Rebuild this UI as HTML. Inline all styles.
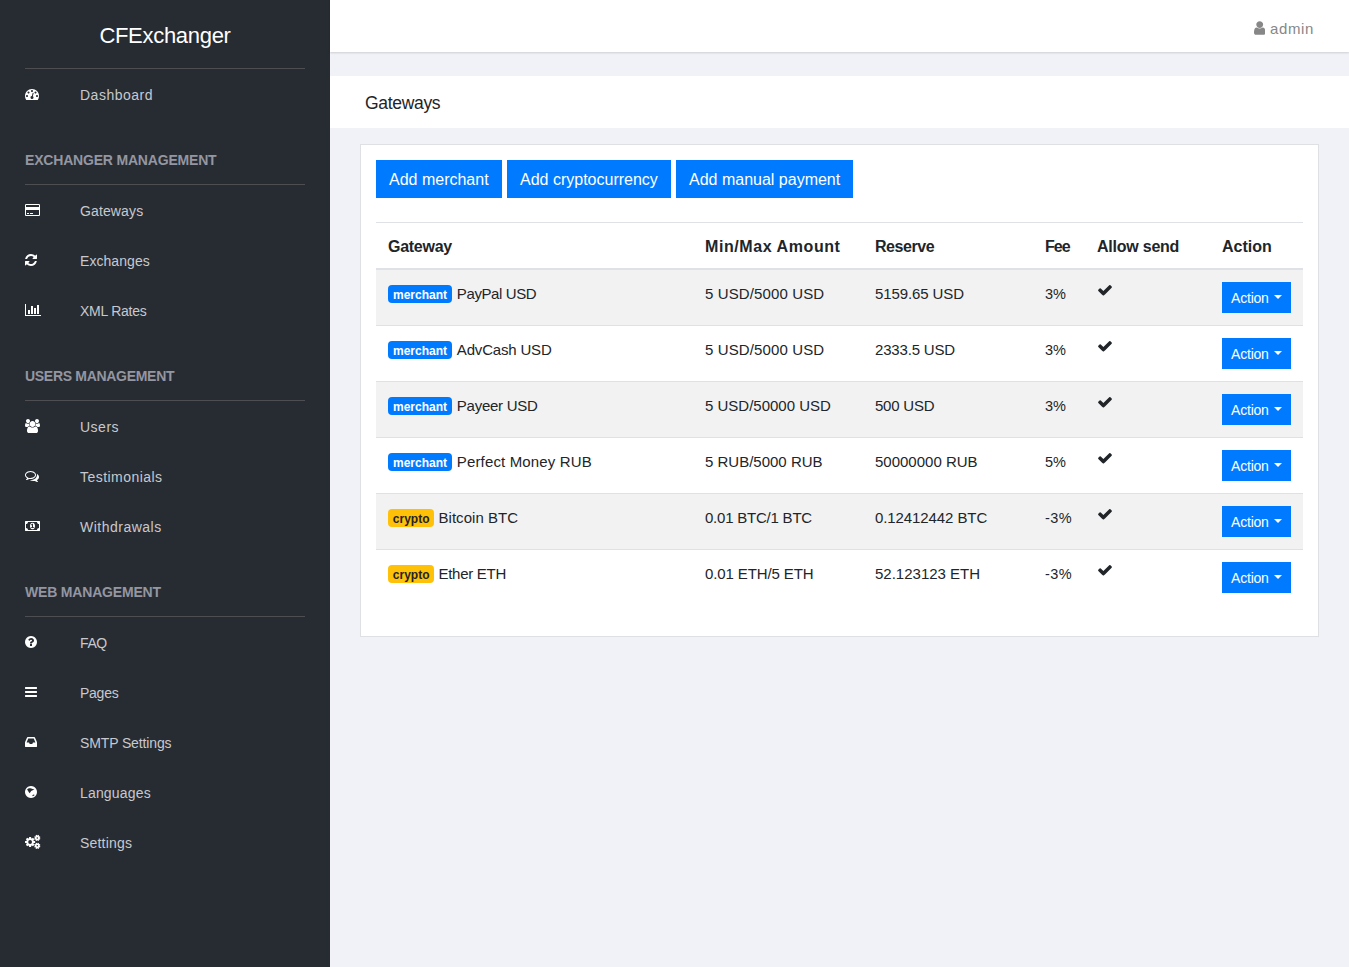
<!DOCTYPE html>
<html lang="en">
<head>
<meta charset="utf-8">
<title>CFExchanger - Gateways</title>
<style>
*{box-sizing:border-box}
html,body{margin:0;padding:0}
body{width:1349px;height:967px;overflow:hidden;background:#f1f2f7;font-family:"Liberation Sans",sans-serif;font-size:16px;color:#212529;position:relative}
a{text-decoration:none;color:inherit}
ul{list-style:none;margin:0;padding:0}
/* ---------- sidebar ---------- */
#left-panel{position:absolute;left:0;top:0;width:330px;height:967px;background:#272c33;padding:0 25px}
.brand{height:69px;border-bottom:1px solid #4e4e52;text-align:center;color:#fff;font-size:22px;line-height:25px;padding-top:23px}
.nav li a{display:block;height:50px;line-height:50px;color:#c8c9ce;font-size:14px;position:relative;padding-left:55px}
.nav li a svg{position:absolute;left:0;top:18px;fill:#fff;overflow:visible}
.nav li a span,.nav li.mt span{position:relative;top:1px}
.nav li.mt{margin:0;padding:15px 0 0;height:66px;line-height:50px;font-size:14px;font-weight:700;color:#9496a1;border-bottom:1px solid #4e4e52;text-transform:uppercase}
/* ---------- right ---------- */
#right-panel{position:absolute;left:330px;top:0;width:1019px;height:967px}
#header{height:52px;background:#fff;box-shadow:0 1px 2px rgba(0,0,0,.15);position:relative}
.user{position:absolute;left:924px;top:0;width:70px;height:52px;color:#878787;font-size:15px;line-height:18px}
.user svg{fill:#878787;position:absolute;left:0;top:20px}
.user span{position:absolute;left:16px;top:20px}
.breadcrumbs{margin-top:24px;height:52px;background:#fff;padding:0 35px}
.breadcrumbs h1{margin:0;font-size:17.5px;font-weight:400;line-height:52px;color:#212529;position:relative;top:1px}
.content{padding:0 30px;margin-top:16px}
.card{background:#fff;border:1px solid #dfe0e4;padding:15px;height:493px}
.btn{display:inline-block;background:#007bff;border:1px solid #007bff;color:#fff;font-size:16px;line-height:24px;padding:6px 12px;height:38px;vertical-align:top;white-space:nowrap}
.btns{height:38px;font-size:0}
.btns .btn{margin-right:5px}
.btns .btn:nth-child(1){width:126px}
.btns .btn:nth-child(2){width:164px}
.btns .btn:nth-child(3){width:177px}
.btn span{position:relative;top:1px}
th span{position:relative;top:1px}
table{border-collapse:separate;border-spacing:0;margin-top:24px;width:927px;table-layout:fixed}
th,td{text-align:left;padding:0 12px;vertical-align:top}
th{height:48px;border-top:1px solid #dee2e6;border-bottom:2px solid #dee2e6;font-weight:700;font-size:16px;line-height:22px;padding-top:12px}
td{height:56px;border-bottom:1px solid #dee2e6;padding-top:12px;line-height:24px;font-size:15px}
tbody tr:last-child td{height:55px;border-bottom:0}
tbody tr:nth-child(odd){background:#f2f2f2}
.badge{display:inline-block;font-size:12px;font-weight:700;line-height:12px;padding:4px 4.8px 2px;border-radius:4px;vertical-align:baseline;color:#fff;background:#007bff;position:relative;top:0;width:64px;text-align:center;margin-right:.7px;white-space:nowrap}
.badge.w{background:#ffc107;color:#212529;width:46px;margin-right:.3px}
.btn-sm{font-size:14px;line-height:21px;padding:4px 8px;height:31px;width:69px}
.btn-sm i{display:inline-block;width:0;height:0;margin-left:5px;vertical-align:3.5px;border-top:4.2px solid #fff;border-left:4.2px solid transparent;border-right:4.2px solid transparent}
td svg{fill:#212529;display:block}
.fee{font-size:14.5px}
</style>
</head>
<body>
<aside id="left-panel">
  <div class="brand"><span style="letter-spacing:-0.30px">CFExchanger</span></div>
  <ul class="nav">
    <li><a href="#"><svg width="14" height="14" viewBox="0 0 1792 1792"><path d="M384 1152q0-53-37.500-90.500t-90.500-37.500-90.500 37.500-37.500 90.500 37.500 90.500 90.500 37.500 90.500-37.500 37.500-90.500zm192-448q0-53-37.500-90.500t-90.500-37.500-90.500 37.500-37.500 90.500 37.500 90.500 90.500 37.500 90.500-37.500 37.500-90.500zm428 481l101-382q6-26-7.500-48.500t-38.500-29.500-48 6.500-30 39.500l-101 382q-60 5-107 43.500t-63 98.500q-20 77 20 146t117 89 146-20 89-117q16-60-6-117t-72-91zm660-33q0-53-37.500-90.500t-90.500-37.500-90.500 37.500-37.500 90.500 37.500 90.500 90.500 37.500 90.500-37.500 37.500-90.500zm-640-640q0-53-37.500-90.500t-90.500-37.500-90.500 37.500-37.500 90.500 37.500 90.500 90.500 37.500 90.500-37.500 37.500-90.500zm448 192q0-53-37.500-90.500t-90.500-37.500-90.500 37.500-37.500 90.500 37.500 90.500 90.500 37.500 90.500-37.500 37.500-90.500zm320 448q0 261-141 483-19 29-54 29h-1402q-35 0-54-29-141-221-141-483 0-182 71-348t191-286 286-191 348-71 348 71 286 191 191 286 71 348z"/></svg><span style="letter-spacing:0.50px">Dashboard</span></a></li>
    <li class="mt"><span style="letter-spacing:-0.19px">Exchanger management</span></li>
    <li><a href="#"><svg width="15" height="14" viewBox="0 0 1920 1792"><path d="M1760 128q66 0 113 47t47 113v1216q0 66-47 113t-113 47h-1600q-66 0-113-47t-47-113v-1216q0-66 47-113t113-47h1600zm-1600 128q-13 0-22.500 9.500t-9.500 22.500v224h1664v-224q0-13-9.500-22.500t-22.500-9.500h-1600zm1600 1280q13 0 22.500-9.500t9.500-22.500v-608h-1664v608q0 13 9.500 22.500t22.500 9.500h1600zm-1504-128v-128h256v128h-256zm384 0v-128h384v128h-384z"/></svg><span style="letter-spacing:0.13px">Gateways</span></a></li>
    <li><a href="#"><svg width="12" height="14" viewBox="0 0 1536 1792"><path d="M1511 1056q0 5-1 7-64 268-268 434.500t-478 166.500q-146 0-282.500-55t-243.500-157l-129 129q-19 19-45 19t-45-19-19-45v-448q0-26 19-45t45-19h448q26 0 45 19t19 45-19 45l-137 137q71 66 161 102t187 36q134 0 250-65t186-179q11-17 53-117 8-23 30-23h192q13 0 22.500 9.500t9.500 22.500zm25-800v448q0 26-19 45t-45 19h-448q-26 0-45-19t-19-45 19-45l138-138q-148-137-349-137-134 0-250 65t-186 179q-11 17-53 117-8 23-30 23h-199q-13 0-22.500-9.500t-9.500-22.500v-7q65-268 270-434.500t480-166.500q146 0 284 55.500t245 156.500l130-129q19-19 45-19t45 19 19 45z"/></svg><span style="letter-spacing:0.06px">Exchanges</span></a></li>
    <li><a href="#"><svg width="16" height="14" viewBox="0 0 2048 1792"><path d="M640 896v512h-256v-512h256zm384-512v1024h-256v-1024h256zm1024 1152v128h-2048v-1536h128v1408h1920zm-640-896v768h-256v-768h256zm384-384v1152h-256v-1152h256z"/></svg><span style="letter-spacing:-0.25px">XML Rates</span></a></li>
    <li class="mt"><span style="letter-spacing:-0.30px">Users management</span></li>
    <li><a href="#"><svg width="15" height="14" viewBox="0 0 1920 1792"><path d="M593 896q-162 5-265 128h-134q-82 0-138-40.500t-56-118.500q0-353 124-353 6 0 43.500 21t97.500 42.500 119 21.500q67 0 133-23-5 37-5 66 0 139 81 256zm1071 637q0 120-73 189.500t-194 69.500h-874q-121 0-194-69.500t-73-189.500q0-53 3.500-103.500t14-109 26.500-108.500 43-97.500 62-81 85.500-53.500 111.500-20q10 0 43 21.500t73 48 107 48 135 21.500 135-21.500 107-48 73-48 43-21.500q61 0 111.500 20t85.500 53.500 62 81 43 97.500 26.500 108.500 14 109 3.500 103.500zm-1024-1277q0 106-75 181t-181 75-181-75-75-181 75-181 181-75 181 75 75 181zm704 384q0 159-112.500 271.500t-271.500 112.500-271.500-112.500-112.500-271.500 112.500-271.500 271.500-112.500 271.500 112.500 112.500 271.500zm576 225q0 78-56 118.500t-138 40.500h-134q-103-123-265-128 81-117 81-256 0-29-5-66 66 23 133 23 59 0 119-21.500t97.500-42.500 43.500-21q124 0 124 353zm-128-609q0 106-75 181t-181 75-181-75-75-181 75-181 181-75 181 75 75 181z"/></svg><span style="letter-spacing:0.50px">Users</span></a></li>
    <li><a href="#"><svg width="14" height="14" viewBox="0 0 1792 1792"><path d="M704 384q-153 0-286 52t-211.500 141-78.500 191q0 82 53 158t149 132l97 56-35 84q34-20 62-39l44-31 53 10q78 14 153 14 153 0 286-52t211.500-141 78.500-191-78.500-191-211.500-141-286-52zm0-128q191 0 353.500 68.500t256.500 186.500 94 257-94 257-256.500 186.500-353.500 68.500q-86 0-176-16-124 88-278 128-36 9-86 16h-3q-11 0-20.500-8t-11.500-21q-1-3-1-6.500t.5-6.500 2-6l2.500-5 3.500-5.500 4-5 4.500-5 4-4.500q5-6 23-25t26-29.500 22.500-29 25-38.500 20.500-44q-124-72-195-177t-71-224q0-139 94-257t256.500-186.500 353.500-68.500zm822 1169q10 24 20.500 44t25 38.500 22.500 29 26 29.500 23 25q1 1 4 4.500t4.500 5 4 5 3.500 5.500l2.500 5 2 6 .5 6.500-1 6.500q-3 14-13 22t-22 7q-50-7-86-16-154-40-278-128-90 16-176 16-271 0-472-132 58 4 88 4 161 0 309-45t264-129q125-92 192-212t67-254q0-77-23-152 129 71 204 178t75 230q0 120-71 224.500t-195 176.500z"/></svg><span style="letter-spacing:0.46px">Testimonials</span></a></li>
    <li><a href="#"><svg width="15" height="14" viewBox="0 0 1920 1792"><path d="M768 1152h384v-96h-128v-448h-114l-148 137 77 80q42-37 55-57h2v288h-128v96zm512-256q0 70-21 142t-59.500 134-101.500 101-138 39-138-39-101.500-101-59.500-134-21-142 21-142 59.500-134 101.500-101 138-39 138 39 101.500 101 59.500 134 21 142zm512 256v-512q-106 0-181-75t-75-181h-1152q0 106-75 181t-181 75v512q106 0 181 75t75 181h1152q0-106 75-181t181-75zm128-832v1152q0 26-19 45t-45 19h-1792q-26 0-45-19t-19-45v-1152q0-26 19-45t45-19h1792q26 0 45 19t19 45z"/></svg><span style="letter-spacing:0.49px">Withdrawals</span></a></li>
    <li class="mt"><span style="letter-spacing:-0.18px">Web management</span></li>
    <li><a href="#"><svg width="12" height="14" viewBox="128 0 1536 1792"><path d="M1024 1376v-192q0-14-9-23t-23-9h-192q-14 0-23 9t-9 23v192q0 14 9 23t23 9h192q14 0 23-9t9-23zm256-672q0-88-55.500-163t-138.500-116-170-41q-243 0-371 213-15 24 8 42l132 100q7 6 19 6 16 0 25-12 53-68 86-92 34-24 86-24 48 0 85.500 26t37.500 59q0 38-20 61t-68 45q-63 28-115.500 86.500t-52.500 125.500v36q0 14 9 23t23 9h192q14 0 23-9t9-23q0-19 21.500-49.500t54.500-49.500q32-18 49-28.500t46-35 44.500-48 28-60.500 12.500-81zm384 192q0 209-103 385.500t-279.500 279.500-385.500 103-385.500-103-279.500-279.500-103-385.500 103-385.500 279.500-279.500 385.500-103 385.500 103 279.500 279.500 103 385.500z"/></svg><span style="letter-spacing:-0.40px">FAQ</span></a></li>
    <li><a href="#"><svg width="12" height="14" viewBox="128 0 1536 1792"><path d="M1664 1344v128q0 26-19 45t-45 19h-1408q-26 0-45-19t-19-45v-128q0-26 19-45t45-19h1408q26 0 45 19t19 45zm0-512v128q0 26-19 45t-45 19h-1408q-26 0-45-19t-19-45v-128q0-26 19-45t45-19h1408q26 0 45 19t19 45zm0-512v128q0 26-19 45t-45 19h-1408q-26 0-45-19t-19-45v-128q0-26 19-45t45-19h1408q26 0 45 19t19 45z"/></svg><span style="letter-spacing:-0.25px">Pages</span></a></li>
    <li><a href="#"><svg width="12" height="14" viewBox="128 0 1536 1792"><path d="M1151 960h316q-1-3-2.500-8t-2.500-8l-212-496h-708l-212 496q-1 2-2.500 8t-2.500 8h316l95 192h320zm513 30v482q0 26-19 45t-45 19h-1408q-26 0-45-19t-19-45v-482q0-62 25-123l238-552q10-25 36.500-42t52.500-17h832q26 0 52.500 17t36.500 42l238 552q25 61 25 123z"/></svg><span style="letter-spacing:-0.13px">SMTP Settings</span></a></li>
    <li><a href="#"><svg width="12" height="12" viewBox="0 0 1240 1240" style="top:19px"><path fill-rule="evenodd" d="M620 0a620 620 0 1 0 0.1 0Z M217 330 L400 230 L560 225 L800 300 L976 372 L800 440 L640 520 L480 760 L400 640 L300 500Z M760 960 L840 900 L940 890 L990 950 L900 1020 L790 1050Z"/></svg><span style="letter-spacing:0.17px">Languages</span></a></li>
    <li><a href="#"><svg width="15.5" height="14" viewBox="0 0 1550 1400"><path fill-rule="evenodd" d="M878.9 589.7 L1015.1 599.5 L1015.1 800.5 L878.9 810.3 L848.8 882.8 L938.2 986.1 L796.1 1128.2 L692.8 1038.8 L620.3 1068.9 L610.5 1205.1 L409.5 1205.1 L399.7 1068.9 L327.2 1038.8 L223.9 1128.2 L81.8 986.1 L171.2 882.8 L141.1 810.3 L4.9 800.5 L4.9 599.5 L141.1 589.7 L171.2 517.2 L81.8 413.9 L223.9 271.8 L327.2 361.2 L399.7 331.1 L409.5 194.9 L610.5 194.9 L620.3 331.1 L692.8 361.2 L796.1 271.8 L938.2 413.9 L848.8 517.2Z M320.0 700.0a190.0 190.0 0 1 0 380.0 0a190.0 190.0 0 1 0 -380.0 0Z M1463.8 314.0 L1538.9 351.5 L1491.9 465.0 L1412.2 438.4 L1378.4 472.2 L1405.0 551.9 L1291.5 598.9 L1254.0 523.8 L1206.0 523.8 L1168.5 598.9 L1055.0 551.9 L1081.6 472.2 L1047.8 438.4 L968.1 465.0 L921.1 351.5 L996.2 314.0 L996.2 266.0 L921.1 228.5 L968.1 115.0 L1047.8 141.6 L1081.6 107.8 L1055.0 28.1 L1168.5 -18.9 L1206.0 56.2 L1254.0 56.2 L1291.5 -18.9 L1405.0 28.1 L1378.4 107.8 L1412.2 141.6 L1491.9 115.0 L1538.9 228.5 L1463.8 266.0Z M1155.0 290.0a75.0 75.0 0 1 0 150.0 0a75.0 75.0 0 1 0 -150.0 0Z M1463.8 1104.0 L1538.9 1141.5 L1491.9 1255.0 L1412.2 1228.4 L1378.4 1262.2 L1405.0 1341.9 L1291.5 1388.9 L1254.0 1313.8 L1206.0 1313.8 L1168.5 1388.9 L1055.0 1341.9 L1081.6 1262.2 L1047.8 1228.4 L968.1 1255.0 L921.1 1141.5 L996.2 1104.0 L996.2 1056.0 L921.1 1018.5 L968.1 905.0 L1047.8 931.6 L1081.6 897.8 L1055.0 818.1 L1168.5 771.1 L1206.0 846.2 L1254.0 846.2 L1291.5 771.1 L1405.0 818.1 L1378.4 897.8 L1412.2 931.6 L1491.9 905.0 L1538.9 1018.5 L1463.8 1056.0Z M1155.0 1080.0a75.0 75.0 0 1 0 150.0 0a75.0 75.0 0 1 0 -150.0 0Z"/></svg><span style="letter-spacing:0.20px">Settings</span></a></li>
  </ul>
</aside>
<div id="right-panel">
  <header id="header">
    <a class="user" href="#"><svg width="11.43" height="16" viewBox="256 0 1280 1792"><path d="M1536 1399q0 109-62.500 187t-150.500 78h-854q-88 0-150.500-78t-62.500-187q0-85 8.500-160.500t31.500-152 58.500-131 94-89 134.500-34.500q131 128 313 128t313-128q76 0 134.500 34.500t94 89 58.500 131 31.500 152 8.500 160.500zm-256-887q0 159-112.500 271.500t-271.500 112.500-271.500-112.500-112.500-271.500 112.500-271.500 271.500-112.500 271.500 112.500 112.500 271.500z"/></svg><span style="letter-spacing:0.60px">admin</span></a>
  </header>
  <div class="breadcrumbs"><h1><span style="letter-spacing:-0.32px">Gateways</span></h1></div>
  <div class="content">
    <div class="card">
      <div class="btns"><a class="btn" href="#"><span>Add merchant</span></a><a class="btn" href="#"><span>Add cryptocurrency</span></a><a class="btn" href="#"><span>Add manual payment</span></a></div>
      <table>
        <colgroup><col style="width:317px"><col style="width:170px"><col style="width:170px"><col style="width:52px"><col style="width:125px"><col style="width:93px"></colgroup>
        <thead><tr><th><span style="letter-spacing:-0.27px">Gateway</span></th><th><span style="letter-spacing:0.58px">Min/Max Amount</span></th><th><span style="letter-spacing:-0.43px">Reserve</span></th><th><span style="letter-spacing:-1.00px">Fee</span></th><th><span style="letter-spacing:-0.23px">Allow send</span></th><th><span>Action</span></th></tr></thead>
        <tbody>
          <tr><td><span class="badge"><span>merchant</span></span> <span class="gn" style="letter-spacing:-0.40px">PayPal USD</span></td><td><span style="letter-spacing:0.12px">5 USD/5000 USD</span></td><td><span style="letter-spacing:-0.10px">5159.65 USD</span></td><td><span class="fee">3%</span></td><td><svg class="chk" width="16" height="16" viewBox="0 0 1792 1792"><path d="M1671 566q0 40-28 68l-724 724-136 136q-28 28-68 28t-68-28l-136-136-362-362q-28-28-28-68t28-68l136-136q28-28 68-28t68 28l294 295 656-657q28-28 68-28t68 28l136 136q28 28 28 68z"/></svg></td><td><a class="btn btn-sm" href="#"><span style="letter-spacing:-0.20px">Action</span><i></i></a></td></tr>
          <tr><td><span class="badge"><span>merchant</span></span> <span class="gn" style="letter-spacing:-0.18px">AdvCash USD</span></td><td><span style="letter-spacing:0.12px">5 USD/5000 USD</span></td><td><span style="letter-spacing:-0.18px">2333.5 USD</span></td><td><span class="fee">3%</span></td><td><svg class="chk" width="16" height="16" viewBox="0 0 1792 1792"><path d="M1671 566q0 40-28 68l-724 724-136 136q-28 28-68 28t-68-28l-136-136-362-362q-28-28-28-68t28-68l136-136q28-28 68-28t68 28l294 295 656-657q28-28 68-28t68 28l136 136q28 28 28 68z"/></svg></td><td><a class="btn btn-sm" href="#"><span style="letter-spacing:-0.20px">Action</span><i></i></a></td></tr>
          <tr><td><span class="badge"><span>merchant</span></span> <span class="gn" style="letter-spacing:-0.27px">Payeer USD</span></td><td><span>5 USD/50000 USD</span></td><td><span style="letter-spacing:-0.23px">500 USD</span></td><td><span class="fee">3%</span></td><td><svg class="chk" width="16" height="16" viewBox="0 0 1792 1792"><path d="M1671 566q0 40-28 68l-724 724-136 136q-28 28-68 28t-68-28l-136-136-362-362q-28-28-28-68t28-68l136-136q28-28 68-28t68 28l294 295 656-657q28-28 68-28t68 28l136 136q28 28 28 68z"/></svg></td><td><a class="btn btn-sm" href="#"><span style="letter-spacing:-0.20px">Action</span><i></i></a></td></tr>
          <tr><td><span class="badge"><span>merchant</span></span> <span class="gn" style="letter-spacing:0.14px">Perfect Money RUB</span></td><td><span>5 RUB/5000 RUB</span></td><td><span>50000000 RUB</span></td><td><span class="fee">5%</span></td><td><svg class="chk" width="16" height="16" viewBox="0 0 1792 1792"><path d="M1671 566q0 40-28 68l-724 724-136 136q-28 28-68 28t-68-28l-136-136-362-362q-28-28-28-68t28-68l136-136q28-28 68-28t68 28l294 295 656-657q28-28 68-28t68 28l136 136q28 28 28 68z"/></svg></td><td><a class="btn btn-sm" href="#"><span style="letter-spacing:-0.20px">Action</span><i></i></a></td></tr>
          <tr><td><span class="badge w"><span>crypto</span></span> <span class="gn" style="letter-spacing:0.05px">Bitcoin BTC</span></td><td><span style="letter-spacing:-0.22px">0.01 BTC/1 BTC</span></td><td><span style="letter-spacing:-0.09px">0.12412442 BTC</span></td><td><span class="fee" style="letter-spacing:0.4px">-3%</span></td><td><svg class="chk" width="16" height="16" viewBox="0 0 1792 1792"><path d="M1671 566q0 40-28 68l-724 724-136 136q-28 28-68 28t-68-28l-136-136-362-362q-28-28-28-68t28-68l136-136q28-28 68-28t68 28l294 295 656-657q28-28 68-28t68 28l136 136q28 28 28 68z"/></svg></td><td><a class="btn btn-sm" href="#"><span style="letter-spacing:-0.20px">Action</span><i></i></a></td></tr>
          <tr><td><span class="badge w"><span>crypto</span></span> <span class="gn" style="letter-spacing:-0.27px">Ether ETH</span></td><td><span style="letter-spacing:-0.11px">0.01 ETH/5 ETH</span></td><td><span>52.123123 ETH</span></td><td><span class="fee" style="letter-spacing:0.4px">-3%</span></td><td><svg class="chk" width="16" height="16" viewBox="0 0 1792 1792"><path d="M1671 566q0 40-28 68l-724 724-136 136q-28 28-68 28t-68-28l-136-136-362-362q-28-28-28-68t28-68l136-136q28-28 68-28t68 28l294 295 656-657q28-28 68-28t68 28l136 136q28 28 28 68z"/></svg></td><td><a class="btn btn-sm" href="#"><span style="letter-spacing:-0.20px">Action</span><i></i></a></td></tr>
        </tbody>
      </table>
    </div>
  </div>
</div>
</body>
</html>
